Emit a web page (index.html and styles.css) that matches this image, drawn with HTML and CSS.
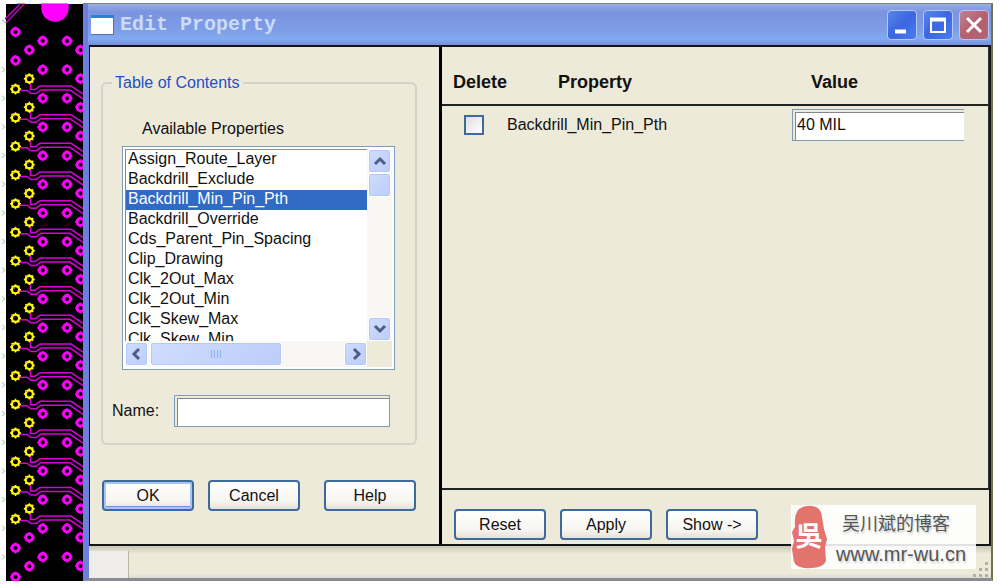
FILE: index.html
```
<!DOCTYPE html>
<html lang="en">
<head>
  <meta charset="UTF-8" />
  <meta name="viewport" content="width=device-width, initial-scale=1.0" />
  <title>Edit Property</title>
  <link rel="stylesheet" href="styles.css">
</head>
<body>
  <!-- Circuit board behind the dialog -->
  <svg class="board" width="83" height="578" viewBox="0 3 83 578" aria-hidden="true">
    <defs>
      <g id="via" fill="none" stroke="#f0f">
        <circle r="3.5" stroke-width="2.9" />
        <path d="M-5.500 0H-3M3 0H5.500M0 -5.500V-3M0 3V5.500" stroke-width="1.500" />
      </g>
      <g id="pin">
        <circle r="3.6" fill="none" stroke="#ff0" stroke-width="2.2" />
        <path d="M-5.500 0H-3M3 0H5.500M0 -5.500V-3M0 3V5.500M-3.900 -3.900L-2 -2M3.900 -3.900L2 -2M-3.900 3.900L-2 2M3.900 3.900L2 2" stroke="#ff0" stroke-width="1.500" />
        <path d="M-1 -1L-3 -3M2 1H3" stroke="#f5a" />
      </g>
      <g id="vias">
        <use href="#via" x="42.7" y="41" />
        <use href="#via" x="67" y="41" />
        <use href="#via" x="80.5" y="50" />
        <path d="M2 67l3 2.500l-3 2.500" fill="none" stroke="#9c9" />
      </g>
      <g id="traces">
        <path d="M20 90.500H27L31 93.500H36L41 90H70L83 99M30.500 82V89.500H35L40 86H71L83 94" fill="none" stroke="#d800d8" stroke-width="1.500" />
        <use href="#pin" x="29.300" y="78.700" />
        <use href="#pin" x="15.500" y="89" />
      </g>
      <g id="traces4">
        <use href="#traces" />
        <use href="#traces" y="28.670" />
        <use href="#traces" y="57.340" />
        <use href="#traces" y="86.010" />
      </g>
      <g id="vias4">
        <use href="#vias" />
        <use href="#vias" y="28.670" />
        <use href="#vias" y="57.340" />
        <use href="#vias" y="86.010" />
      </g>
    </defs>
    <rect x="6" y="4" width="77" height="577" fill="#000" />
    <path d="M41.300 4H68.700V8A13.700 13.700 0 0 1 41.300 8Z" fill="#f0f" />
    <path d="M41 3.500H68M17 3.500H25" stroke="#3e3" />
    <path d="M5 19L20 4M6 23L24 4" stroke="#c000c0" stroke-width="1.500" />
    <path d="M2 20l4 3" stroke="#7c7" />
    <use href="#via" x="15.500" y="32" />
    <use href="#via" x="29.300" y="50" />
    <use href="#via" x="15.500" y="60.500" />
    <use href="#traces4" />
    <use href="#traces4" y="114.680" />
    <use href="#traces4" y="229.360" />
    <use href="#traces4" y="344.040" />
    <use href="#vias4" />
    <use href="#vias4" y="114.680" />
    <use href="#vias4" y="229.360" />
    <use href="#vias4" y="344.040" />
    <use href="#vias" y="458.720" />
    <use href="#vias" y="487.390" />
    <use href="#vias" y="516.060" />
    <use href="#via" x="29.300" y="537.500" />
    <use href="#via" x="15.500" y="548" />
    <use href="#via" x="29.300" y="566.200" />
    <use href="#via" x="15.500" y="577" />
  </svg>

  <main class="window">
    <header class="titlebar">
      <span class="app-icon"></span>
      <h1>Edit Property</h1>
      <button class="caption" aria-label="Minimize">
        <svg width="28" height="28"><path d="M7 20.500H18" stroke="#fff" stroke-width="4" /></svg>
      </button>
      <button class="caption" aria-label="Maximize">
        <svg width="28" height="28"><path d="M6 8.500H22" stroke="#fff" stroke-width="4" /><rect x="7" y="8" width="14" height="13" fill="none" stroke="#fff" stroke-width="2" /></svg>
      </button>
      <button class="caption close" aria-label="Close">
        <svg width="28" height="28"><path d="M7 7L21 21M21 7L7 21" stroke="#fff" stroke-width="3" /></svg>
      </button>
    </header>

    <div class="panes">
      <!-- Left pane -->
      <section class="left">
        <fieldset>
          <legend>Table of Contents</legend>
          <label class="list-label" for="available">Available Properties</label>
          <div class="listbox">
            <select id="available" size="10">
              <option>Assign_Route_Layer</option>
              <option>Backdrill_Exclude</option>
              <option selected>Backdrill_Min_Pin_Pth</option>
              <option>Backdrill_Override</option>
              <option>Cds_Parent_Pin_Spacing</option>
              <option>Clip_Drawing</option>
              <option>Clk_2Out_Max</option>
              <option>Clk_2Out_Min</option>
              <option>Clk_Skew_Max</option>
              <option>Clk_Skew_Min</option>
            </select>
            <div class="vscroll">
              <button class="arrow" aria-label="Scroll up"><svg width="14" height="14"><path d="M2 10L7 5L12 10" /></svg></button>
              <span class="thumb"></span>
              <button class="arrow" aria-label="Scroll down"><svg width="14" height="14"><path d="M2 4L7 9L12 4" /></svg></button>
            </div>
            <div class="hscroll">
              <button class="arrow" aria-label="Scroll left"><svg width="14" height="14"><path d="M9 2L4 7L9 12" /></svg></button>
              <span class="thumb"><svg width="12" height="10"><path d="M1.500 1V9M4.500 1V9M7.500 1V9M10.500 1V9" stroke="#8cb0f8" /></svg></span>
              <button class="arrow" aria-label="Scroll right"><svg width="14" height="14"><path d="M5 2L10 7L5 12" /></svg></button>
            </div>
          </div>
          <div class="name-row">
            <label for="name">Name:</label>
            <input class="text" type="text" id="name">
          </div>
        </fieldset>
        <div class="buttons">
          <button class="btn default">OK</button>
          <button class="btn">Cancel</button>
          <button class="btn help">Help</button>
        </div>
      </section>

      <!-- Right pane -->
      <section class="right">
        <div class="props">
          <table>
            <thead>
              <tr>
                <th class="col-delete">Delete</th>
                <th class="col-property">Property</th>
                <th class="col-value">Value</th>
              </tr>
            </thead>
            <tbody>
              <tr>
                <td class="check-cell"><input type="checkbox" id="del"></td>
                <td><label for="del">Backdrill_Min_Pin_Pth</label></td>
                <td class="value-cell"><input class="text cut" type="text" value="40 MIL" aria-label="Value"></td>
              </tr>
            </tbody>
          </table>
        </div>
        <div class="buttons">
          <button class="btn">Reset</button>
          <button class="btn">Apply</button>
          <button class="btn">Show -&gt;</button>
        </div>
      </section>
    </div>

    <footer class="status">
      <span class="status-cell"></span>
      <svg class="grip" width="17" height="17" fill="#b5b19f"><path d="M12 1h3v3h-3zM6 7h3v3h-3zM12 7h3v3h-3zM0 13h3v3h-3zM6 13h3v3h-3zM12 13h3v3h-3z" /></svg>
    </footer>

    <!-- Blog badge over the corner -->
    <div class="badge">
      <svg width="36" height="64" viewBox="0 0 36 64">
        <path d="M8 4Q14 0 21 1Q30 2 31 12L33 24L36 34L34 42L35 56Q32 63 20 63Q6 64 3 57L1 44L3 36L1 27L4 22Q3 9 8 4Z" fill="#e3736d" />
        <text x="18" y="41" text-anchor="middle">吳</text>
      </svg>
      <div class="badge-text">
        <span class="blog">吴川斌的博客</span>
        <span class="site">www.mr-wu.cn</span>
      </div>
    </div>
  </main>
</body>
</html>
```

FILE: styles.css
```
/* BASE */
* {
  margin: 0;
  padding: 0;
  box-sizing: border-box;
}
body {
  display: flex;
  min-height: 100vh;
  padding: 3px 7px 4px 0;
  background: #fff;
  color: #111;
  font: 16px/20px "Liberation Sans", Arial, sans-serif;
}
button, input, select {
  font: inherit;
  color: inherit;
}
.board {
  flex: none;
}
/* WINDOW */
.window {
  position: relative;
  flex: 1;
  display: flex;
  flex-direction: column;
  background: #edead9;
  border-top: 1px solid #8b8578;
  border-left: 6px solid #6b7fdb;
  border-right: 2px solid #77714f;
  border-bottom: 3px solid #8a8a92;
}
.titlebar {
  display: flex;
  align-items: center;
  gap: 6px;
  height: 41px;
  padding: 0 2px 0 3px;
  margin-left: -1px;
  background: linear-gradient(#98aee8, #7b93e0 20%, #7d9ce6 60%, #82abf0 85%, #738ee0);
}
.titlebar h1 {
  flex: 1;
  color: #cadcf9;
  font: bold 20px/24px "Liberation Mono", monospace;
}
.app-icon {
  width: 23px;
  height: 20px;
  background: #fff;
  border-top: 3px solid #2b83d6;
  border-right: 1px solid #5d6fa8;
  border-bottom: 1px solid #5d6fa8;
}
.caption {
  width: 30px;
  height: 30px;
  border: 1px solid #b5c9f7;
  border-radius: 4px;
  background: linear-gradient(135deg, #5a86e8, #3a66e0 50%, #4a7cf4);
}
.caption svg {
  display: block;
}
.caption.close {
  background: linear-gradient(135deg, #c08292, #b5606e 50%, #b36572);
}
/* PANES */
.panes {
  flex: 1;
  display: flex;
  border: 2px solid #161616;
  border-left-width: 1px;
}
.left {
  width: 352px;
  padding: 26px 22px 0 11px;
  border-right: 3px solid #000;
}
.right {
  flex: 1;
  display: flex;
  flex-direction: column;
}
fieldset {
  height: 372px;
  padding: 26px 20px 0 9px;
  border: 2px solid #d5d3c3;
  border-radius: 6px;
}
legend {
  padding: 0 3px;
  color: #2350c8;
}
.list-label {
  display: block;
  margin-left: 30px;
}
.listbox {
  display: grid;
  grid-template: 192px 26px / 1fr 25px;
  margin: 7px 0 0 10px;
  padding: 2px;
  border: 1px solid #7f9db9;
  background: #edead9;
  outline: 2px solid #fff;
  outline-offset: -3px;
}
.listbox select {
  border: 0;
  border-top: 1px solid #8e8b80;
  border-left: 1px solid #8e8b80;
  border-radius: 0;
  outline: 0;
  overflow: hidden;
  background: #fff;
}
.listbox option {
  min-height: 20px;
  padding: 0 2px;
  line-height: 20px;
}
.listbox option:checked {
  background: #316ac5 linear-gradient(#316ac5, #316ac5);
  color: #fff;
}
.vscroll, .hscroll {
  display: flex;
  align-items: center;
  background: #f9f7f4;
}
.vscroll {
  flex-direction: column;
}
.arrow, .thumb {
  display: flex;
  align-items: center;
  justify-content: center;
  width: 23px;
  height: 24px;
  border: 1px solid #fff;
  border-radius: 3px;
  background: linear-gradient(135deg, #cfdcfd, #bccdfa);
  box-shadow: inset 0 0 0 1px #b5c7f2;
}
.arrow path {
  fill: none;
  stroke: #4a5f86;
  stroke-width: 3;
}
.vscroll .arrow:last-child {
  margin-top: auto;
}
.hscroll .thumb {
  width: 132px;
  margin: 0 auto 0 2px;
}
/* CONTROLS */
.name-row {
  display: flex;
  align-items: center;
  justify-content: space-between;
  margin: 25px 5px 0 0;
}
.text {
  height: 32px;
  padding: 0 4px;
  border: 1px solid #7f9db9;
  border-radius: 0;
  background: #fff;
  box-shadow: inset 2px 2px 0 #edead9, inset 3px 3px 0 #85858c;
}
.name-row .text {
  width: 216px;
}
.text.cut {
  width: 100%;
  border-right: 0;
}
.buttons {
  display: flex;
  gap: 14px;
}
.left .buttons {
  padding: 35px 1px 0 1px;
}
.right .buttons {
  padding: 19px 12px 4px;
}
.btn {
  width: 92px;
  height: 31px;
  border: 2px solid #3d6a9c;
  border-radius: 4px;
  background: linear-gradient(#fff, #f6f5f0 70%, #e4e1d6);
}
.btn.default {
  box-shadow: inset 0 0 0 2px #a9c4f2, inset 0 -3px 0 #6c90dc;
}
.btn.help {
  margin-left: auto;
}
/* PROPERTY TABLE */
.props {
  flex: 1;
  border-bottom: 2px solid #222;
  border-right: 1px solid #333;
}
table {
  width: 100%;
  border-collapse: collapse;
  table-layout: fixed;
}
th {
  height: 58px;
  padding-top: 12px;
  border-bottom: 2px solid #222;
  font-size: 18px;
  text-align: left;
}
.col-delete {
  width: 65px;
  padding-left: 11px;
}
.col-property {
  width: 285px;
  padding-left: 51px;
}
.col-value {
  padding-left: 19px;
}
td {
  padding-top: 3px;
}
.check-cell {
  padding-left: 22px;
}
.value-cell {
  padding-right: 24px;
}
input[type="checkbox"] {
  appearance: none;
  display: block;
  width: 20px;
  height: 20px;
  border: 2px solid #3d6a9c;
  background: linear-gradient(135deg, #dfdfdc, #fff);
}
input[type="checkbox"]:checked {
  background: #3d6a9c;
}
/* STATUS BAR */
.status {
  display: flex;
  justify-content: space-between;
  align-items: flex-end;
  height: 32px;
  padding-right: 1px;
  background: linear-gradient(#c9c6b6, #edead9 25%, #edead9 85%, #dddbd8);
}
.status-cell {
  width: 40px;
  height: 27px;
  border-right: 1px solid #b9b6a6;
  background: #efeeea;
}
/* BADGE */
.badge {
  position: absolute;
  right: 15px;
  bottom: 9px;
  display: flex;
  width: 185px;
  height: 64px;
  background: rgba(255, 255, 255, 0.88);
}
.badge text {
  fill: #fff;
  font: bold 27px "Noto Sans CJK TC", sans-serif;
}
.badge-text {
  display: flex;
  flex-direction: column;
  flex: 1;
  padding: 2px 0 0 9px;
  color: #555;
  text-shadow: 1px 2px 2px #ccc;
  white-space: nowrap;
}
.blog {
  padding-left: 6px;
  font: 18px/30px "Noto Sans CJK SC", sans-serif;
}
.site {
  font: 20px/34px "Liberation Sans", Arial, sans-serif;
}
```
